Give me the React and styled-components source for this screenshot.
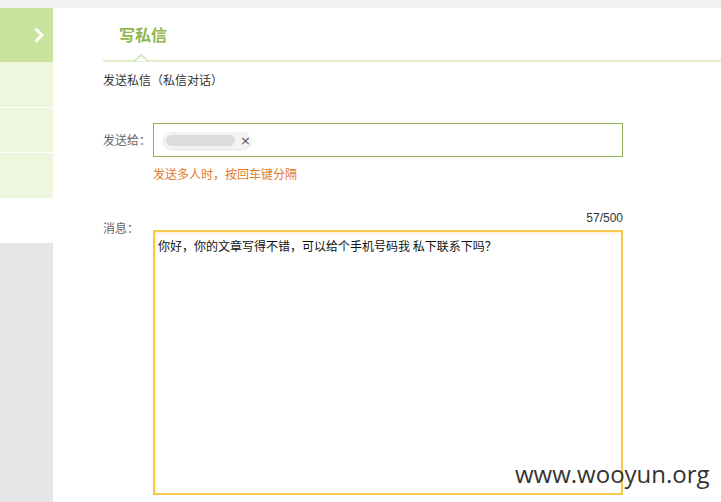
import React from "react";
import styled, { createGlobalStyle } from "styled-components";

const Global = createGlobalStyle`
  html, body { margin: 0; padding: 0; background: #fff; }
  body { font-family: "Noto Sans CJK SC", "Liberation Sans", sans-serif; font-size: 12px; color: #333; }
`;

const Page = styled.div`
  position: relative;
  width: 721px;
  height: 502px;
  overflow: hidden;
  display: flex;
  flex-direction: column;
`;

const TopStrip = styled.div`
  height: 8px;
  background: #f1f1f1;
  flex: none;
`;

const Body = styled.div`
  flex: 1;
  display: flex;
`;

const Sidebar = styled.div`
  width: 53px;
  flex: none;
  display: flex;
  flex-direction: column;
`;

const SideItem = styled.div`
  height: ${(p) => p.$h}px;
  background: ${(p) => p.$bg};
  border-bottom: ${(p) => (p.$line ? "1px solid #fff" : "none")};
  display: flex;
  align-items: center;
  justify-content: flex-end;
  padding-right: 9px;
  box-sizing: border-box;
  flex: none;
`;

const SideFill = styled.div`
  flex: 1;
  background: #e6e6e6;
`;

const Main = styled.div`
  flex: 1;
  padding-left: 50px;
  display: flex;
  flex-direction: column;
`;

const Header = styled.div`
  position: relative;
  height: 54px;
  border-bottom: 2px solid #e0eecb;
  display: flex;
  align-items: center;
  padding-left: 16px;
  box-sizing: border-box;
`;

const Title = styled.div`
  font-size: 16px;
  font-weight: 700;
  color: #8fb54f;
  margin-top: -1px;
`;

const Notch = styled.div`
  position: absolute;
  left: 31px;
  bottom: -2px;
  width: 14px;
  height: 8px;
  svg { display: block; }
`;

const Sub = styled.div`
  margin-top: 10px;
  height: 16px;
  line-height: 16px;
  color: #333;
`;

const Row = styled.div`
  display: flex;
  margin-top: ${(p) => p.$mt}px;
`;

const Label = styled.div`
  width: 50px;
  flex: none;
  color: #666;
  line-height: 16px;
  padding-top: ${(p) => p.$pt}px;
`;

const Field = styled.div`
  width: 470px;
  display: flex;
  flex-direction: column;
`;

const InputBox = styled.div`
  height: 34px;
  border: 1px solid #93b15b;
  box-sizing: border-box;
  display: flex;
  align-items: center;
  padding-left: 9px;
`;

const Chip = styled.div`
  height: 17px;
  width: 88px;
  border-radius: 9px;
  background: #f3f3f3;
  box-shadow: 0 1px 2px rgba(0,0,0,0.12);
  display: flex;
  align-items: center;
  padding-left: 3px;
  box-sizing: border-box;
  gap: 5px;
`;

const Blur = styled.div`
  width: 70px;
  height: 11px;
  border-radius: 6px;
  background: #dcdcdc;
  filter: blur(0.6px);
`;

const Close = styled.span`
  font-size: 13px;
  color: #555;
  line-height: 1;
  font-family: "DejaVu Sans", sans-serif;
`;

const Hint = styled.div`
  margin-top: 9px;
  color: #e27a1e;
  line-height: 16px;
`;

const Counter = styled.div`
  text-align: right;
  font-family: "Liberation Sans", sans-serif;
  color: #333;
  line-height: 14px;
  height: 14px;
  margin-top: -1px;
  margin-bottom: 5px;
`;

const TextArea = styled.div`
  height: 265px;
  border: 2px solid #f6c84c;
  box-sizing: border-box;
  box-shadow: inset 1px 1px 3px rgba(240, 200, 80, 0.35);
  padding: 6px 3px;
  color: #111;
  line-height: 16px;
  font-family: "Noto Sans CJK SC", sans-serif;
`;

const Watermark = styled.div`
  position: absolute;
  left: 515px;
  top: 457px;
  font-family: "Open Sans", "Liberation Sans", sans-serif;
  font-size: 24px;
  color: #333;
`;

export default function App() {
  return (
    <Page>
      <Global />
      <TopStrip />
      <Body>
        <Sidebar>
          <SideItem $h={54} $bg="#c8e49c">
            <svg width="10" height="16" viewBox="0 0 10 16">
              <path d="M1.5 1.5 L8 8 L1.5 14.5" fill="none" stroke="#fff" strokeWidth="3" strokeLinejoin="miter" />
            </svg>
          </SideItem>
          <SideItem $h={46} $bg="#eef6dd" $line />
          <SideItem $h={45} $bg="#eef6dd" $line />
          <SideItem $h={45} $bg="#eef6dd" />
          <SideItem $h={45} $bg="#fff" />
          <SideFill />
        </Sidebar>
        <Main>
          <Header>
            <Title>写私信</Title>
            <Notch>
              <svg width="14" height="8" viewBox="0 0 14 8">
                <path d="M0 7 L7 1 L14 7" fill="#fff" stroke="#d6e8bb" strokeWidth="2" />
              </svg>
            </Notch>
          </Header>
          <Sub>发送私信（私信对话）</Sub>
          <Row $mt={35}>
            <Label $pt={9}>发送给：</Label>
            <Field>
              <InputBox>
                <Chip>
                  <Blur />
                  <Close>×</Close>
                </Chip>
              </InputBox>
              <Hint>发送多人时，按回车键分隔</Hint>
            </Field>
          </Row>
          <Row $mt={30}>
            <Label $pt={8}>消息：</Label>
            <Field>
              <Counter>57/500</Counter>
              <TextArea>你好，你的文章写得不错，可以给个手机号码我 私下联系下吗？</TextArea>
            </Field>
          </Row>
        </Main>
      </Body>
      <Watermark>www.wooyun.org</Watermark>
    </Page>
  );
}
